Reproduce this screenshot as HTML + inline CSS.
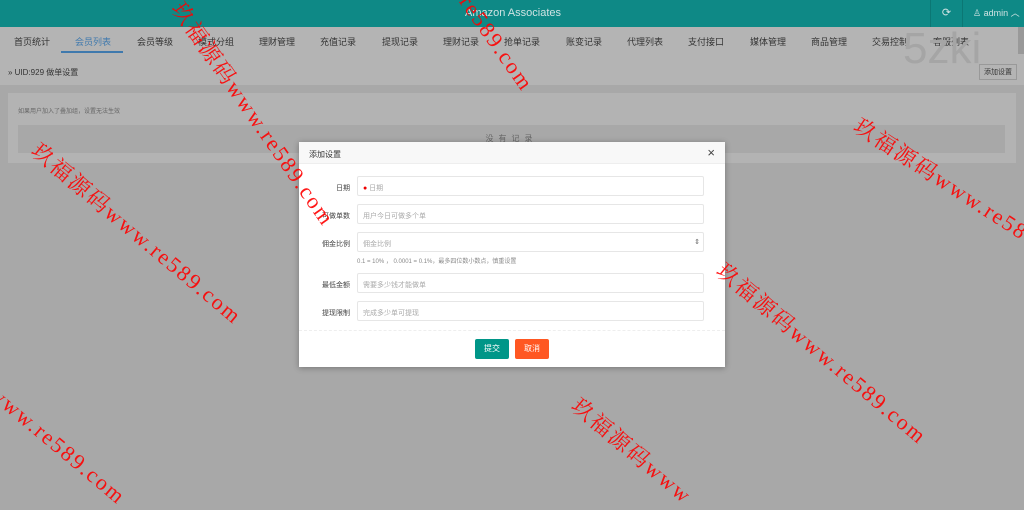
<!DOCTYPE html>
<html><head><meta charset="utf-8"><style>
*{margin:0;padding:0;box-sizing:border-box}
body{width:1024px;height:509px;overflow:hidden;background:#a8a8a8;font-family:"Liberation Sans","Noto Sans CJK SC",sans-serif;position:relative}
.hd{position:absolute;left:0;top:0;width:1024px;height:27px;background:#0e8986;color:#cfe3e3;font-size:11px}
.hd .t{position:absolute;left:465px;top:7px}
.hd .r1{position:absolute;left:930px;top:0;width:32px;height:27px;border-left:1px solid #0b7774;text-align:center;line-height:27px}
.hd .r2{position:absolute;left:962px;top:0;width:62px;height:27px;border-left:1px solid #0b7774;line-height:27px;padding-left:10px;font-size:9px}
.nav{position:absolute;left:0;top:27px;width:1024px;height:27px;background:#b4b4b4;font-size:9px;color:#333}
.nav span{position:absolute;top:8px}
.nav .a{color:#3f79ad}
.nav .ul{position:absolute;left:61px;top:24px;width:62px;height:2px;background:#3f79ad}
.bc{position:absolute;left:0;top:54px;width:1024px;height:31px;background:#b4b4b4;font-size:8px;color:#333}
.band{position:absolute;left:0;top:85px;width:1024px;height:424px;background:#a8a8a8}
.panel{position:absolute;left:8px;top:93px;width:1008px;height:70px;background:#b3b3b3}
.bar{position:absolute;left:18px;top:125px;width:987px;height:28px;background:#a8a8a8;font-size:8px;color:#666;text-align:center;line-height:28px;letter-spacing:5px}
.m{position:absolute;left:299px;top:142px;width:426px;height:225px;background:#fff;box-shadow:0 1px 6px rgba(0,0,0,.3)}
.mh{height:22px;background:#f8f8f8;border-bottom:1px solid #eee;font-size:8px;color:#333;padding:7px 10px;position:relative}
.mh b{position:absolute;right:10px;top:3px;font-weight:normal;font-size:13px;color:#444}
.lb{position:absolute;left:0;width:51px;text-align:right;font-size:7px;color:#444}
.in{position:absolute;left:58px;width:347px;height:20px;border:1px solid #e6e6e6;font-size:7px;color:#aaa;padding:6px 5px;border-radius:2px}
.btn{position:absolute;top:197px;height:20px;width:34px;color:#fff;font-size:8px;text-align:center;line-height:20px;border-radius:2px}
.wm{position:absolute;color:#f00;font-family:"Liberation Serif","Noto Serif CJK SC",serif;font-size:22px;white-space:nowrap;transform-origin:0 0;opacity:.9;letter-spacing:2px}
</style></head><body>
<div class="hd"><span class="t">Amazon Associates</span><div class="r1">⟳</div><div class="r2">♙ admin ︿</div></div>
<div class="nav">
<span style="left:14px">首页统计</span><span class="a" style="left:75px">会员列表</span><span style="left:137px">会员等级</span><span style="left:198px">模式分组</span><span style="left:259px">理财管理</span><span style="left:320px">充值记录</span><span style="left:382px">提现记录</span><span style="left:443px">理财记录</span><span style="left:504px">抢单记录</span><span style="left:566px">账变记录</span><span style="left:627px">代理列表</span><span style="left:688px">支付接口</span><span style="left:750px">媒体管理</span><span style="left:811px">商品管理</span><span style="left:872px">交易控制</span><span style="left:933px">客服列表</span>
<div class="ul"></div>
<div style="position:absolute;left:1018px;top:0;width:6px;height:27px;background:#999"></div>
</div>
<div class="bc"><span style="position:absolute;left:8px;top:13px">» UID:929 做单设置</span>
<span style="position:absolute;left:903px;top:-30px;font-size:44px;color:#a5a5a5;font-family:'Liberation Sans';">5zki</span>
<span style="position:absolute;left:979px;top:10px;border:1px solid #999;padding:2px 4px;font-size:7px;background:#b4b4b4">添加设置</span></div>
<div class="band"></div>
<div class="panel"><span style="position:absolute;left:10px;top:13px;font-size:6px;color:#666">如果用户加入了叠加组，设置无法生效</span></div>
<div class="bar">没有记录</div>
<div class="m">
<div class="mh">添加设置<b>×</b></div>
<div class="lb" style="top:41px">日期</div><div class="in" style="top:34px"><span style="color:#e00">●</span> 日期</div>
<div class="lb" style="top:69px">可做单数</div><div class="in" style="top:62px">用户今日可做多个单</div>
<div class="lb" style="top:97px">佣金比例</div><div class="in" style="top:90px">佣金比例<span style="position:absolute;right:3px;top:5px;color:#666">⇕</span></div>
<div style="position:absolute;left:58px;top:114px;font-size:6px;color:#888">0.1 = 10% ， 0.0001 = 0.1%，最多四位数小数点，慎重设置</div>
<div class="lb" style="top:138px">最低金额</div><div class="in" style="top:131px">需要多少钱才能做单</div>
<div class="lb" style="top:166px">提现限制</div><div class="in" style="top:159px">完成多少单可提现</div>
<div style="position:absolute;left:0;top:188px;width:426px;border-top:1px dashed #eee"></div>
<div class="btn" style="left:176px;background:#009688">提交</div>
<div class="btn" style="left:216px;background:#ff5722">取消</div>
</div>
<div class="wm" style="left:190px;top:-5px;transform:rotate(55deg)">玖福源码www.re589.com</div>
<div class="wm" style="left:475px;top:-10px;transform:rotate(55deg)">re589.com</div>
<div class="wm" style="left:45px;top:135px;transform:rotate(40deg)">玖福源码www.re589.com</div>
<div class="wm" style="left:0px;top:380px;transform:rotate(40deg)">www.re589.com</div>
<div class="wm" style="left:730px;top:255px;transform:rotate(40deg)">玖福源码www.re589.com</div>
<div class="wm" style="left:585px;top:390px;transform:rotate(40deg)">玖福源码www</div>
<div class="wm" style="left:865px;top:110px;transform:rotate(33deg)">玖福源码www.re58</div>
</body></html>
